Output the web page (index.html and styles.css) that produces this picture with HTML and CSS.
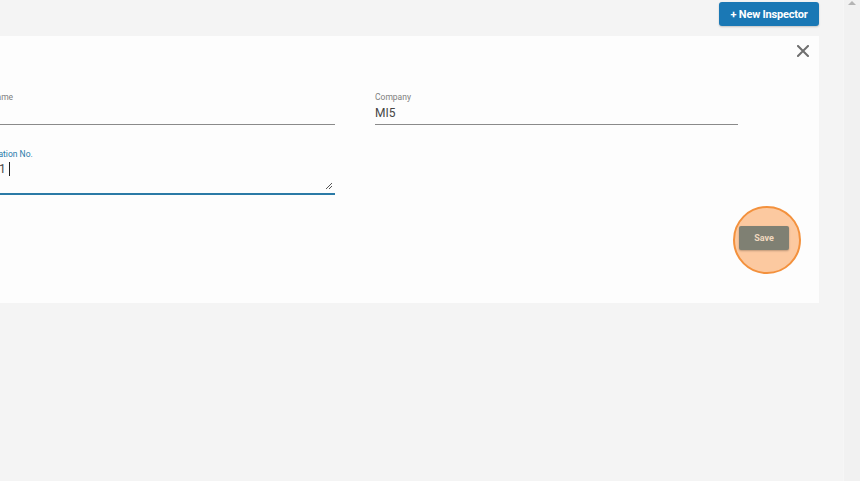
FILE: index.html
```html
<!DOCTYPE html>
<html>
<head>
  <title>Inspectors</title>
  <meta charset="utf-8">
  <link rel="stylesheet" href="styles.css">
</head>
<body>
  <div class="page">
    <div class="toolbar">
      <button class="primary-btn">+ New Inspector</button>
    </div>

    <div class="edit-panel">
      <div class="panel-header">
        <span class="close-btn" title="Close">
          <svg width="12" height="12" viewBox="0 0 12 12">
            <path d="M1 1 L11 11 M11 1 L1 11" stroke="#6f6f6f" stroke-width="2" stroke-linecap="square"/>
          </svg>
        </span>
      </div>

      <div class="fields">
        <div class="field">
          <label>Last Name</label>
          <div class="field-value"></div>
        </div>
        <div class="field">
          <label>Company</label>
          <div class="field-value">MI5</div>
        </div>
        <div class="field focused">
          <label>Registration No.</label>
          <div class="field-value textarea">
            <span>12341</span><span class="caret"></span>
            <svg class="resize-grip" width="8" height="8" viewBox="0 0 8 8">
              <path d="M1 7 L7 1 M4 7 L7 4" stroke="#555" stroke-width="1"/>
            </svg>
          </div>
        </div>
      </div>

      <div class="panel-actions">
        <div class="save-wrap">
          <span class="click-marker"></span>
          <button class="save-btn">Save</button>
        </div>
      </div>
    </div>
  </div>

  <div class="scrollbar">
    <span class="scroll-arrow"></span>
  </div>
</body>
</html>
```

FILE: styles.css
```css
html, body {
  height: 100%;
}

body {
  margin: 0;
  display: flex;
  background-color: #f4f4f4;
  font-family: Roboto, "Liberation Sans", sans-serif;
  overflow: hidden;
}

.page {
  flex: 1;
  min-width: 0;
}

.toolbar {
  display: flex;
  justify-content: flex-end;
  padding: 2px 24px 0 0;
}

.primary-btn {
  width: 100px;
  height: 24px;
  padding: 0;
  background-color: #1a78b5;
  color: #fff;
  border: none;
  border-radius: 3px;
  font-family: Roboto, "Liberation Sans", sans-serif;
  font-size: 11px;
  font-weight: 700;
  letter-spacing: -0.2px;
  box-shadow: 0 1px 2px rgba(0, 0, 0, 0.2);
  cursor: pointer;
}

/* panel is wider than the view, scrolled past its left edge */
.edit-panel {
  margin: 10px 24px 0 -60px;
  height: 267px;
  padding: 0 0 0 32px;
  box-sizing: border-box;
  background-color: #fdfdfd;
  display: flex;
  flex-direction: column;
}

.panel-header {
  display: flex;
  justify-content: flex-end;
  padding: 9px 10px 0 0;
  height: 12px;
}

.close-btn {
  display: block;
  width: 12px;
  height: 12px;
  cursor: pointer;
}

.close-btn svg {
  display: block;
}

.fields {
  display: grid;
  grid-template-columns: 363px 363px;
  column-gap: 40px;
  row-gap: 24px;
  margin-top: 35px;
}

.field label {
  display: block;
  font-size: 8.5px;
  line-height: 10px;
  color: #808080;
}

.field-value {
  height: 18px;
  line-height: 18px;
  padding-bottom: 2px;
  font-size: 12px;
  color: #454545;
  border-bottom: 1px solid #8a8a8a;
  margin-top: 2px;
}

.field.focused label {
  color: #2b7bab;
}

.field-value.textarea {
  position: relative;
  height: 31px;
  padding-top: 0;
  margin-top: 1px;
  border-bottom: 2px solid #2a7aa6;
  display: flex;
  align-items: flex-start;
}

.caret {
  display: inline-block;
  width: 1px;
  height: 14px;
  margin: 2px 0 0 3px;
  background-color: #222;
}

.resize-grip {
  position: absolute;
  right: 2px;
  bottom: 3px;
}

.panel-actions {
  display: flex;
  justify-content: flex-end;
  padding: 31px 30px 0 0;
}

.save-wrap {
  position: relative;
}

.click-marker {
  position: absolute;
  left: -6px;
  top: -20px;
  width: 64px;
  height: 64px;
  border: 2px solid #f3913d;
  border-radius: 50%;
  background-color: #fcc9a0;
}

.save-btn {
  position: relative;
  width: 50px;
  height: 24px;
  padding: 0;
  border: none;
  border-radius: 2px;
  background-color: #7f8073;
  color: #efd8bf;
  font-family: Roboto, "Liberation Sans", sans-serif;
  font-size: 9px;
  font-weight: 700;
  box-shadow: 0 1px 2px rgba(0, 0, 0, 0.25);
}

.scrollbar {
  width: 16px;
  flex-shrink: 0;
  background-color: #f1f1f1;
  border-left: 1px solid #f6f6f6;
  display: flex;
  justify-content: center;
}

.scroll-arrow {
  width: 0;
  height: 0;
  margin-top: 1px;
  border-left: 4px solid transparent;
  border-right: 4px solid transparent;
  border-bottom: 4px solid #b4b4b4;
}
```
